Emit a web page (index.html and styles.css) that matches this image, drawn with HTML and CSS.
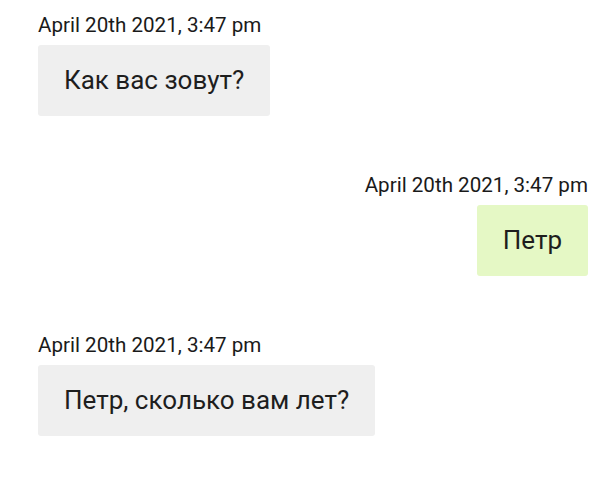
FILE: index.html
```html
<!DOCTYPE html>
<html lang="ru">
<head>
<meta charset="utf-8">
<link rel="stylesheet" href="styles.css">
</head>
<body>
<div class="chat">
  <div class="msg in">
    <div class="time">April 20th 2021, 3:47 pm</div>
    <div class="bubble">Как вас зовут?</div>
  </div>
  <div class="msg out">
    <div class="time">April 20th 2021, 3:47 pm</div>
    <div class="bubble">Петр</div>
  </div>
  <div class="msg in">
    <div class="time">April 20th 2021, 3:47 pm</div>
    <div class="bubble">Петр, сколько вам лет?</div>
  </div>
</div>
</body>
</html>
```
FILE: styles.css
```css
html, body {
  margin: 0;
  padding: 0;
  background: #ffffff;
}
body {
  font-family: Roboto, "Liberation Sans", sans-serif;
  color: #1e1e1e;
}
.chat {
  display: flex;
  flex-direction: column;
  gap: 57px;
  padding: 13px 16px 0 38px;
}
.msg {
  display: flex;
  flex-direction: column;
  align-items: flex-start;
  gap: 8px;
}
.msg.out {
  align-items: flex-end;
}
.time {
  font-size: 20.6px;
  line-height: 24px;
  color: #1a1a1a;
}
.bubble {
  font-size: 26px;
  line-height: 30px;
  padding: 20px 26px 21px;
  background: #efefef;
  border-radius: 3px;
}
.msg.out .bubble {
  background: #e5f8c5;
}
```
